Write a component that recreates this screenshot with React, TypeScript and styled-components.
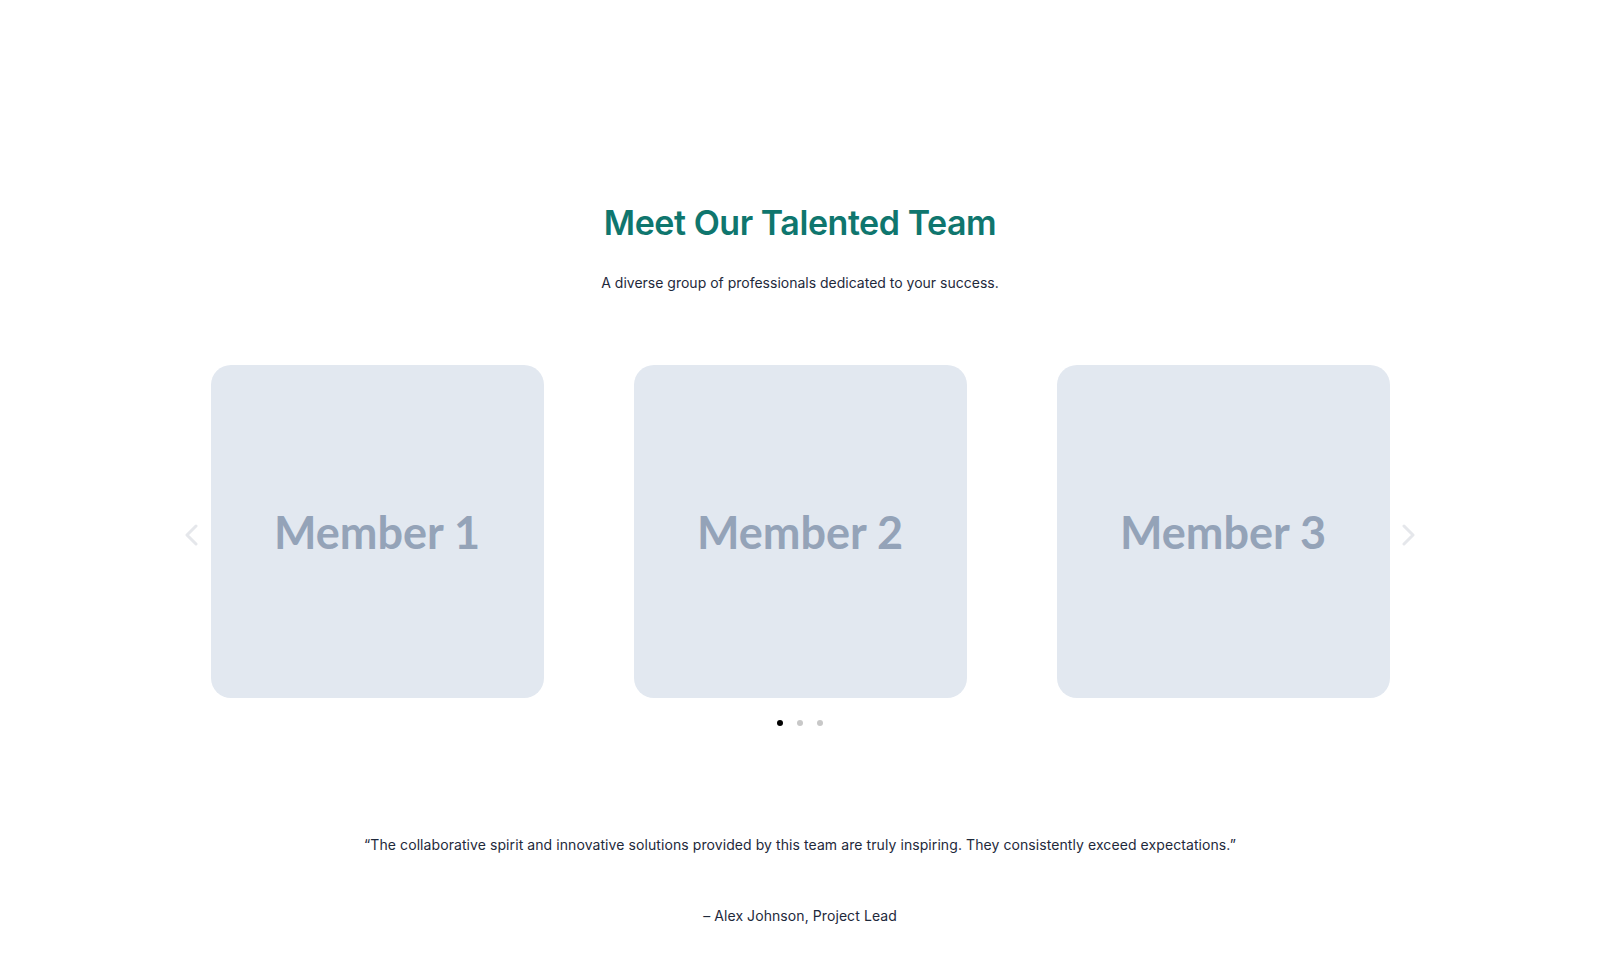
import React, { useState } from "react";
import styled, { createGlobalStyle } from "styled-components";

const GlobalStyle = createGlobalStyle`
  html, body { margin: 0; padding: 0; background: #ffffff; }
  body { font-family: "Inter", "Noto Sans", sans-serif; color: #1e293b; }
  * { box-sizing: border-box; }
`;

const Section = styled.section`
  display: flex;
  flex-direction: column;
  align-items: center;
  padding-top: 201px;
  padding-bottom: 60px;
`;

const Title = styled.h2`
  margin: 0;
  font-size: 34px;
  line-height: 43px;
  font-weight: 600;
  color: #0f766e;
  letter-spacing: -0.45px;
`;

const BodyText = styled.p`
  margin: 0;
  font-size: 14px;
  line-height: 24px;
  color: #1e293b;
  letter-spacing: 0.08px;
`;

const Subtitle = styled(BodyText)`
  margin-top: 27px;
  letter-spacing: 0;
`;

const Carousel = styled.div`
  margin-top: 70px;
  display: flex;
  align-items: center;
  gap: 11px;
`;

const Track = styled.div`
  display: flex;
  gap: 90px;
`;

const Card = styled.div`
  width: 333px;
  height: 333px;
  border-radius: 20px;
  background: #e2e8f0;
  display: flex;
  align-items: center;
  justify-content: center;
  font-family: "Lato", sans-serif;
  font-weight: 700;
  font-size: 45px;
  color: #94a3b8;
`;

const Arrow = styled.button`
  width: 16px;
  height: 24px;
  padding: 0;
  border: 0;
  background: none;
  display: flex;
  align-items: center;
  justify-content: center;
  cursor: pointer;
  margin-top: 6px;
`;

const Dots = styled.div`
  margin-top: 22px;
  display: flex;
  gap: 14px;
`;

const Dot = styled.button<{ $active: boolean }>`
  width: 6px;
  height: 6px;
  padding: 0;
  border: 0;
  border-radius: 50%;
  background: ${(p) => (p.$active ? "#000000" : "#c8c8c8")};
  cursor: pointer;
`;

const Quote = styled(BodyText)`
  margin-top: 107px;
`;

const Author = styled(BodyText)`
  margin-top: 47px;
`;

const Chevron = ({ dir }: { dir: "left" | "right" }) => (
  <svg width="13" height="22" viewBox="0 0 13 22" fill="none">
    <path
      d={dir === "left" ? "M11 2 L2 11 L11 20" : "M2 2 L11 11 L2 20"}
      stroke="#e5e7eb"
      strokeWidth="3"
      strokeLinecap="round"
      strokeLinejoin="round"
    />
  </svg>
);

const members = ["Member 1", "Member 2", "Member 3"];

export default function App() {
  const [page, setPage] = useState(0);
  return (
    <>
      <GlobalStyle />
      <Section>
        <Title>Meet Our Talented Team</Title>
        <Subtitle>A diverse group of professionals dedicated to your success.</Subtitle>
        <Carousel>
          <Arrow aria-label="Previous" onClick={() => setPage((page + 2) % 3)}>
            <Chevron dir="left" />
          </Arrow>
          <Track>
            {members.map((m) => (
              <Card key={m}>{m}</Card>
            ))}
          </Track>
          <Arrow aria-label="Next" onClick={() => setPage((page + 1) % 3)}>
            <Chevron dir="right" />
          </Arrow>
        </Carousel>
        <Dots>
          {[0, 1, 2].map((i) => (
            <Dot key={i} $active={i === page} onClick={() => setPage(i)} aria-label={`Slide ${i + 1}`} />
          ))}
        </Dots>
        <Quote>
          “The collaborative spirit and innovative solutions provided by this team are truly inspiring. They consistently exceed expectations.”
        </Quote>
        <Author>– Alex Johnson, Project Lead</Author>
      </Section>
    </>
  );
}
